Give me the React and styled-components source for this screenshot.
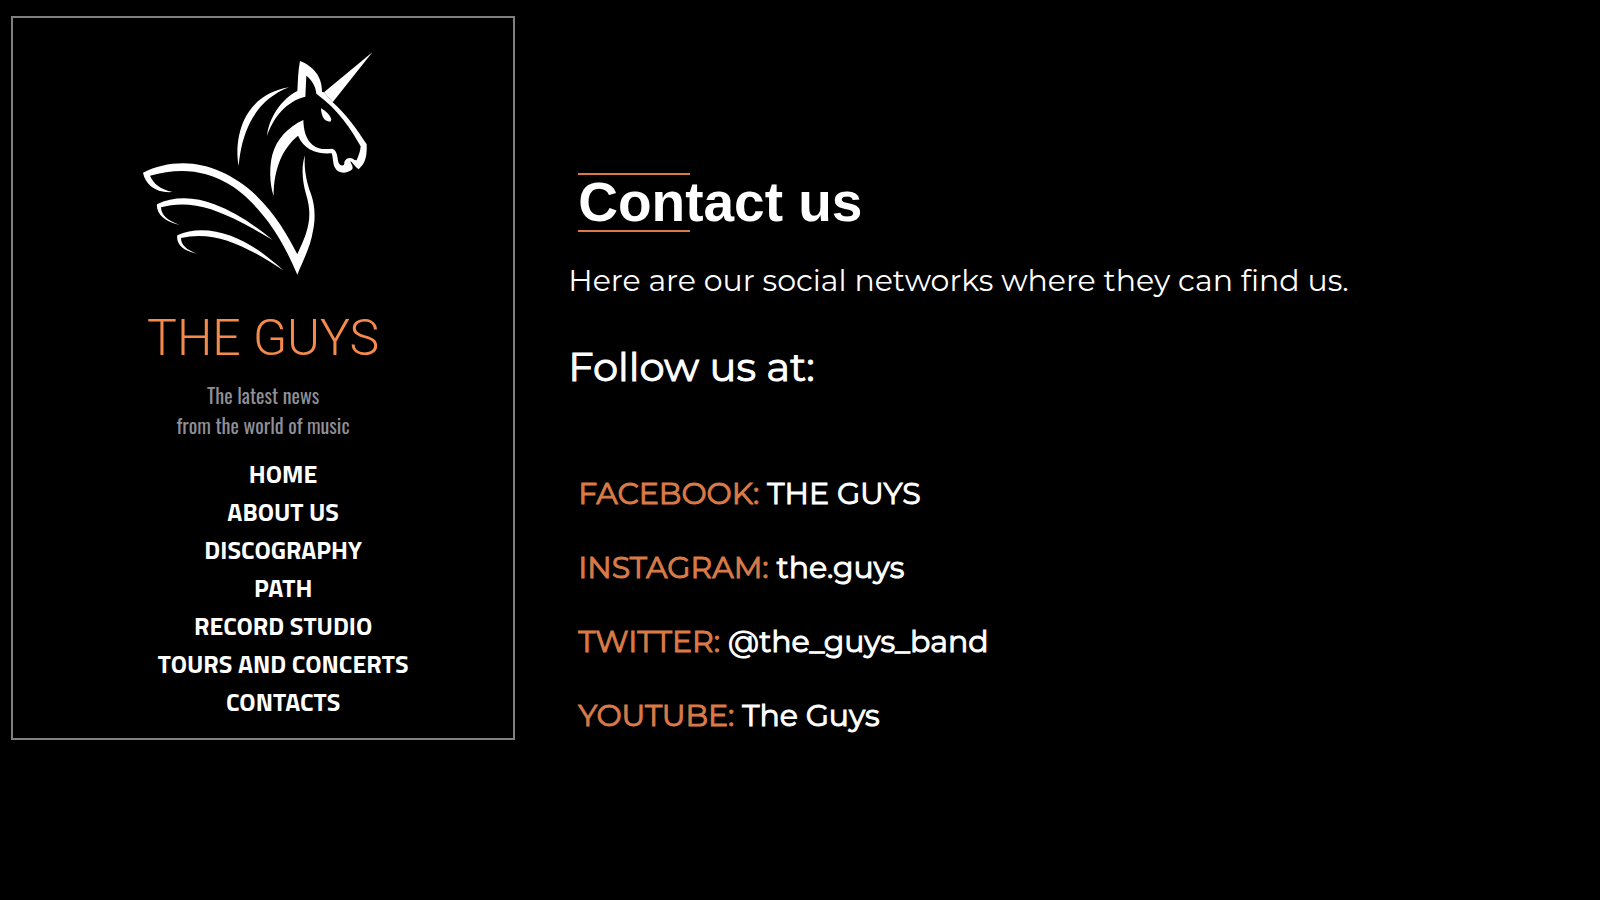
import React from 'react';
import styled, { createGlobalStyle } from 'styled-components';

const Global = createGlobalStyle`
  *, *::before, *::after { box-sizing: border-box; }
  html { background: #000; }
  body { margin: 0; background: #000; color: #fff; font-family: Montserrat, Inter, sans-serif; }
`;

const Page = styled.div`
  display: flex;
  align-items: flex-start;
  padding: 16px 10px 16px 11px;
`;

const Sidebar = styled.header`
  flex: 0 0 calc(32% - 1px);
  display: flex;
  flex-direction: column;
  align-items: center;
  padding: 22px 0 17px;
  border: 2px solid #808080;
`;

const Logo = styled.svg`
  display: block;
  width: 260px;
  height: 240px;
  fill: #fff;
`;

const Brand = styled.h1`
  margin: 25px 0 0;
  font: 300 50px/66px Roboto, sans-serif;
  color: #f58a4c;
`;

const Tagline = styled.p`
  margin: 9px 0 0;
  text-align: center;
  font: 400 20px/30px Oswald, "Roboto Condensed", Roboto, sans-serif;
  color: #8f8f97;
`;

const Nav = styled.ul`
  margin: 15px 0 0;
  padding: 0 0 0 40px;
  list-style: none;
  text-align: center;
`;

const NavItem = styled.li`
  height: 38px;
`;

const NavLink = styled.a`
  font: 700 25px/38px "Titillium Web", Roboto, sans-serif;
  color: #fff;
  text-decoration: none;
`;

const Main = styled.main`
  flex: 1;
  padding: 157px 0 0 53px;
`;

const Title = styled.h2`
  display: flex;
  flex-direction: column;
  margin: 0 10px;
  font: 700 55px/55px "Liberation Sans", Arial, sans-serif;

  &::before, &::after {
    content: "";
    width: 112px;
    height: 2px;
    background: #d97a47;
  }
`;

const Intro = styled.p`
  margin: 27px 0 0;
  font-size: 30px;
  font-weight: 400;
  line-height: 44px;
  font-variant-ligatures: none;
`;

const Subtitle = styled.h3`
  margin: 35px 0 0;
  font-size: 40px;
  font-weight: 400;
  line-height: 58px;
  -webkit-text-stroke: 1px currentColor;
`;

const Networks = styled.ul`
  display: flex;
  flex-direction: column;
  gap: 30px;
  margin: 76px 10px 0;
  padding: 0;
  list-style: none;
  font-size: 30px;
  font-weight: 400;
  line-height: 44px;
  -webkit-text-stroke: 1px currentColor;
`;

const Network = styled.span`
  color: #d97a47;
`;

const links = ['HOME', 'ABOUT US', 'DISCOGRAPHY', 'PATH', 'RECORD STUDIO', 'TOURS AND CONCERTS', 'CONTACTS'];

const networks = [
  ['FACEBOOK:', 'THE GUYS'],
  ['INSTAGRAM:', 'the.guys'],
  ['TWITTER:', '@the_guys_band'],
  ['YOUTUBE:', 'The Guys'],
];

function Unicorn() {
  return (
    <Logo viewBox="9 0 780 720" role="img" aria-label="Unicorn">
      {/* horn */}
      <path d="M727 37 L608 187 L582 157 Z" />
      {/* ear, brow, nose and mouth */}
      <path d="M510 63 C548 78 577 108 576 156 L582 157 L608 187 C650 224 680 268 710 313 C711 344 707 362 698 374 L686 388 C676 382 671 372 662 363 C661 371 671 377 667 388 C650 402 625 402 616 385 C608 374 610 354 605 340 C560 343 523 330 504 287 C458 325 431 385 431 468 C418 432 418 377 427 344 C440 297 474 261 520 240 C521 275 529 298 547 314 C568 331 588 327 607 326 C624 332 621 355 626 369 C632 380 645 379 643 366 C648 352 664 350 674 360 L680 361 C686 347 691 334 692 319 C664 268 625 209 559 161 C557 138 545 119 529 107 L526 170 C467 184 429 235 411 288 C416 232 457 175 502 153 C504 121 504 92 510 63 Z" />
      {/* eye */}
      <path d="M573 205 C590 215 601 226 604 239 L601 245 C580 245 574 226 573 205 Z" />
      {/* outer mane */}
      <path d="M477 142 C414 152 366 188 342 241 C322 285 318 337 326 378 C330 332 340 287 361 246 C385 199 424 162 477 142 Z" />
      {/* chest and large wing */}
      <path d="M525 346 C513 380 517 425 528 462 C538 494 541 524 535 553 C529 586 514 616 502 643 C474 586 433 519 382 470 C318 407 236 370 160 370 C116 370 76 380 39 398 C46 432 75 460 128 456 C92 448 71 432 60 407 C119 390 178 388 228 403 C309 426 364 479 415 546 C449 592 477 645 502 704 C520 659 541 622 549 572 C557 535 555 496 543 462 C529 425 521 383 525 346 Z" />
      {/* middle feather */}
      <path d="M81 493 C131 468 196 470 253 493 C316 517 372 554 428 600 C362 561 302 528 243 508 C190 490 136 489 93 502 C94 528 115 542 149 555 C102 545 78 520 81 493 Z" />
      {/* lower feather */}
      <path d="M142 586 C190 563 249 568 302 587 C360 609 414 649 460 691 C403 653 348 621 292 602 C246 587 198 583 153 594 C153 616 170 629 201 641 C158 632 138 612 142 586 Z" />
    </Logo>
  );
}

export default function App() {
  return (
    <>
      <Global />
      <Page>
        <Sidebar>
          <Unicorn />
          <Brand>THE GUYS</Brand>
          <Tagline>The latest news<br />from the world of music</Tagline>
          <nav>
            <Nav>
              {links.map((label) => (
                <NavItem key={label}><NavLink href="#">{label}</NavLink></NavItem>
              ))}
            </Nav>
          </nav>
        </Sidebar>
        <Main>
          <Title>Contact us</Title>
          <Intro>Here are our social networks where they can find us.</Intro>
          <Subtitle>Follow us at:</Subtitle>
          <Networks>
            {networks.map(([name, handle]) => (
              <li key={name}><Network>{name}</Network> {handle}</li>
            ))}
          </Networks>
        </Main>
      </Page>
    </>
  );
}
